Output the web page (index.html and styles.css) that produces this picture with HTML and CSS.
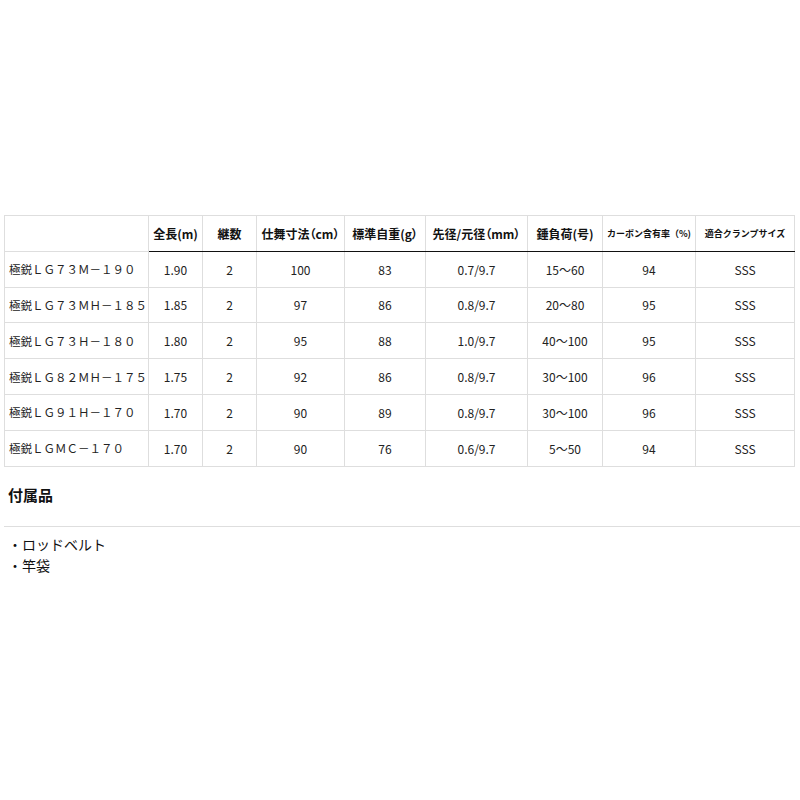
FILE: index.html
```html
<!DOCTYPE html>
<html lang="ja">
<head>
<meta charset="utf-8">
<link rel="stylesheet" href="styles.css">
</head>
<body>
<div class="page">
  <table class="spec">
    <colgroup>
      <col class="c1"><col class="c2"><col class="c3"><col class="c4"><col class="c5"><col class="c6"><col class="c7"><col class="c8"><col class="c9">
    </colgroup>
    <thead>
      <tr>
        <th class="blank"></th>
        <th>全長(m)</th>
        <th>継数</th>
        <th>仕舞寸法（cm）</th>
        <th>標準自重(g）</th>
        <th>先径/元径（mm）</th>
        <th>錘負荷(号)</th>
        <th class="small">カーボン含有率（%)</th>
        <th class="small">適合クランプサイズ</th>
      </tr>
    </thead>
    <tbody>
      <tr><td class="name">極鋭ＬＧ７３Ｍ－１９０</td><td>1.90</td><td>2</td><td>100</td><td>83</td><td>0.7/9.7</td><td>15～60</td><td>94</td><td>SSS</td></tr>
      <tr><td class="name">極鋭ＬＧ７３ＭＨ－１８５</td><td>1.85</td><td>2</td><td>97</td><td>86</td><td>0.8/9.7</td><td>20～80</td><td>95</td><td>SSS</td></tr>
      <tr><td class="name">極鋭ＬＧ７３Ｈ－１８０</td><td>1.80</td><td>2</td><td>95</td><td>88</td><td>1.0/9.7</td><td>40～100</td><td>95</td><td>SSS</td></tr>
      <tr><td class="name">極鋭ＬＧ８２ＭＨ－１７５</td><td>1.75</td><td>2</td><td>92</td><td>86</td><td>0.8/9.7</td><td>30～100</td><td>96</td><td>SSS</td></tr>
      <tr><td class="name">極鋭ＬＧ９１Ｈ－１７０</td><td>1.70</td><td>2</td><td>90</td><td>89</td><td>0.8/9.7</td><td>30～100</td><td>96</td><td>SSS</td></tr>
      <tr><td class="name">極鋭ＬＧＭＣ－１７０</td><td>1.70</td><td>2</td><td>90</td><td>76</td><td>0.6/9.7</td><td>5～50</td><td>94</td><td>SSS</td></tr>
    </tbody>
  </table>

  <h2 class="acc-title">付属品</h2>
  <ul class="acc-list">
    <li>・ロッドベルト</li>
    <li>・竿袋</li>
  </ul>
</div>
</body>
</html>
```

FILE: styles.css
```css
html, body {
  margin: 0;
  padding: 0;
  background: #fff;
}
body {
  font-family: "Noto Sans CJK JP", "Noto Sans", sans-serif;
  color: #222;
}
.page {
  padding: 215px 0 0 4px;
}
.spec {
  width: 790px;
  table-layout: fixed;
  border-collapse: collapse;
  border: 1px solid #dedede;
}
.c1 { width: 144px; }
.c2 { width: 54px; }
.c3 { width: 54px; }
.c4 { width: 88px; }
.c5 { width: 81px; }
.c6 { width: 102px; }
.c7 { width: 75px; }
.c8 { width: 93px; }
.c9 { width: 99px; }

.spec th, .spec td {
  border: 1px solid #dedede;
  height: 34.8px;
  padding: 0;
  text-align: center;
  vertical-align: middle;
  white-space: nowrap;
}
.spec th {
  font-size: 12px;
  font-weight: 700;
  color: #111;
  border-bottom: 1px solid #111;
  font-feature-settings: "palt";
}
.spec th.blank {
  border-bottom: 1px solid #dedede;
}
.spec th.small {
  font-size: 9px;
  font-feature-settings: normal;
}
.spec td {
  font-size: 12px;
  color: #222;
}
.spec td.name {
  text-align: left;
  padding-left: 4px;
  font-size: 11.5px;
}
.acc-title {
  margin: 0;
  padding: 17px 0 0 4px;
  font-size: 15px;
  font-weight: 700;
  line-height: 22px;
  color: #111;
  height: 42px;
  border-bottom: 1px solid #dedede;
}
.acc-list {
  list-style: none;
  margin: 0;
  padding: 7px 0 0 4px;
  font-size: 14px;
  line-height: 21px;
  color: #111;
}
```
